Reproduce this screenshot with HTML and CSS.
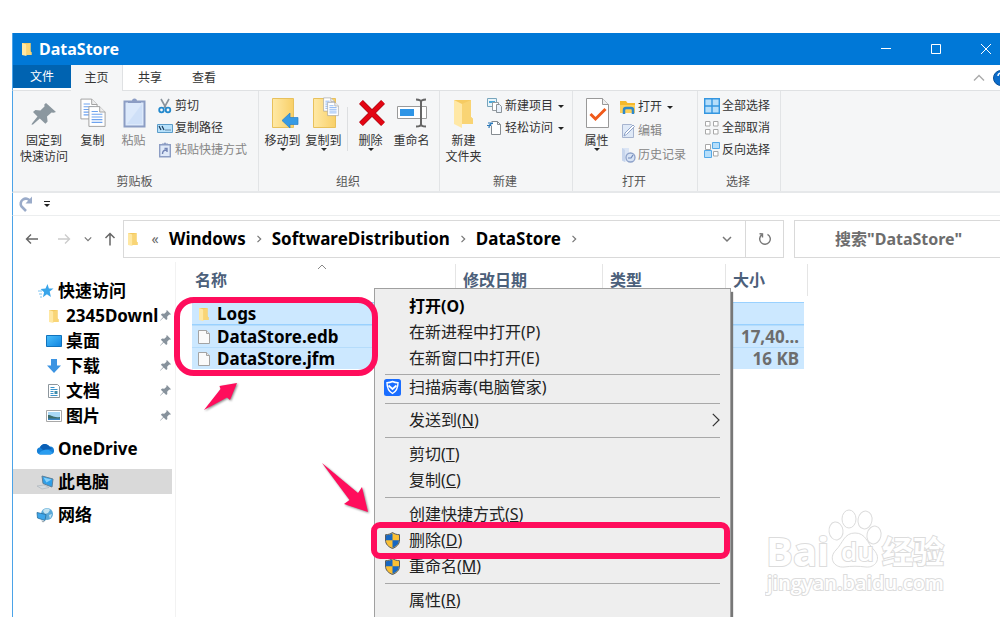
FILE: index.html
```html
<!DOCTYPE html>
<html lang="zh-CN">
<head>
<meta charset="utf-8">
<title>DataStore</title>
<link rel="stylesheet" href="styles.css">
</head>
<body>
<svg class="sprite" aria-hidden="true">
  <defs>
    <linearGradient id="gold" x1="0" x2="1"><stop offset="0" stop-color="#ffe9a6"/><stop offset="1" stop-color="#f8cf67"/></linearGradient>
    <linearGradient id="sky" x1="0" y1="0" x2="1" y2="1"><stop offset="0" stop-color="#4cc0fb"/><stop offset="1" stop-color="#0f83e0"/></linearGradient>
  </defs>
  <symbol id="folder" viewBox="0 0 16 16"><path d="M3 2h8.500v8.500l1 .8V14H3z" fill="#f3c95f"/><path d="M3 2l4.500 1.400V15L3 14z" fill="#ffe8a3"/><path d="M7.500 3.400L11.500 2v8.500l1 .8V14h-5z" fill="#f9d576"/></symbol>
  <symbol id="file" viewBox="0 0 16 16"><path d="M2.500 1.500h8l3 3v10h-11z" fill="#fafafa" stroke="#a3a3a3"/><path d="M10.500 1.500v3h3" fill="#e6e6e6" stroke="#a3a3a3"/></symbol>
  <symbol id="pin" viewBox="0 0 16 16"><path d="M10 0l6 6-1.600.8-1-.2-3 3.200.3 3.200-1.700 1.700-3.700-3.700L.8 15.400 0 15.900l.4-1L4.600 10 1.200 6.900l1.900-1.700 3.100.4L9.500 2.600 9.200 1.500z" fill="#87929c"/></symbol>
  <symbol id="chev-right" viewBox="0 0 8 8"><path d="M2.500.8L5.700 4 2.500 7.200" fill="none" stroke="#777" stroke-width="1.200"/></symbol>
  <symbol id="chev-down" viewBox="0 0 10 10"><path d="M1 3l4 4 4-4" fill="none" stroke="#777" stroke-width="1.500"/></symbol>
  <symbol id="shield" viewBox="0 0 16 17"><path d="M8 .5C6 2 3.500 2.700 1 2.700V8c0 4.300 3 7 7 8.500 4-1.500 7-4.200 7-8.500V2.700C12.500 2.700 10 2 8 .5z" fill="#fbbf33" stroke="#555b62"/><path d="M8 1.200V8.300H1.500V3.200C4 3.200 6.300 2.500 8 1.200zM8 8.300h6.500C14.300 12 11.700 14.500 8 15.900z" fill="#1767c2"/></symbol>
  <symbol id="page" viewBox="0 0 20 24"><path d="M1 1h12l6 6v16H1z" fill="#fff" stroke="#9b9b9b"/><path d="M13 1v6h6" fill="#eee" stroke="#9b9b9b"/><path d="M4 9.500h12M4 12.500h12M4 15.500h12M4 18.500h12M4 6.500h7" stroke="#6ea3ef" stroke-width="1.200"/></symbol>
</svg>

<div class="window">
  <header class="titlebar">
    <svg class="i16"><use href="#folder"/></svg>
    <h1 class="title">DataStore</h1>
    <div class="caption">
      <button class="caption-btn" aria-label="最小化"><svg class="i12" viewBox="0 0 12 12"><path d="M1 5.500h10"/></svg></button>
      <button class="caption-btn" aria-label="最大化"><svg class="i12" viewBox="0 0 12 12"><path d="M1.500 1.500h9v9h-9z"/></svg></button>
      <button class="caption-btn" aria-label="关闭"><svg class="i12" viewBox="0 0 12 12"><path d="M1 1l10 10M11 1L1 11"/></svg></button>
    </div>
  </header>

  <nav class="tabs">
    <button class="tab tab-file">文件</button>
    <button class="tab tab-active">主页</button>
    <button class="tab">共享</button>
    <button class="tab">查看</button>
    <div class="tabs-end">
      <button class="plain" aria-label="折叠功能区"><svg class="i12" viewBox="0 0 12 12"><path d="M1 8.500l5-5 5 5" fill="none" stroke="#aaa" stroke-width="1.400"/></svg></button>
      <button class="plain" aria-label="帮助"><svg class="i16" viewBox="0 0 16 16"><circle cx="8" cy="8" r="7.500" fill="#0a6ccb" stroke="#084e96"/><path d="M5 6a3 3 0 1 1 3.500 3v1.500" fill="none" stroke="#fff" stroke-width="1.500"/></svg></button>
    </div>
  </nav>

  <div class="ribbon">
    <section class="group group-clip">
      <div class="group-body">
        <button class="big big-wide"><svg class="i32" viewBox="0 0 32 32"><path d="M18 6l10 9-2.500.8-2-.3-4.500 4 .6 5-2.200 2.300-5.600-5.300L5 27.500l-1.500.3.600-1.600 5.400-6.700-4.500-4.600L7.400 13l5 .4L16.500 9.500 16.300 7.500z" fill="#8b979f"/></svg>固定到<br>快速访问</button>
        <button class="big"><svg class="i32" viewBox="0 0 32 32"><svg x="3" y="1" width="18" height="22"><use href="#page"/></svg><svg x="11" y="8" width="18" height="23"><use href="#page"/></svg></svg>复制</button>
        <button class="big muted"><svg class="i32" viewBox="0 0 32 32"><path d="M6.500 4.500h20v25h-20z" fill="#dce9fb" stroke="#8c9dc4" stroke-width="2"/><path d="M9 27l15-20v20z" fill="#cfe0f8"/><path d="M10 6V4h4a2.500 2.500 0 0 1 5 0h4v2z" fill="#8c9dc4"/></svg>粘贴</button>
        <div class="list">
          <button class="small"><svg class="i16" viewBox="0 0 16 16"><path d="M4 1l5 9M12 1L7 10" stroke="#8b949c" stroke-width="1.600"/><circle cx="4.500" cy="12" r="2.300" fill="none" stroke="#2389cd" stroke-width="1.800"/><circle cx="11" cy="12" r="2.300" fill="none" stroke="#2389cd" stroke-width="1.800"/></svg>剪切</button>
          <button class="small"><svg class="i16" viewBox="0 0 16 16"><path d="M.5 4.500h15v8H.5z" fill="#b7e1fb" stroke="#5b9cc9"/><path d="M2 6l2 4M5 6l2 4M8.500 10h1M10.500 10h1M12.500 10h1" stroke="#173a5a" stroke-width="1.200"/></svg>复制路径</button>
          <button class="small muted"><svg class="i16" viewBox="0 0 16 16"><path d="M2.700 2.700h10.600v12H2.700z" fill="#dfe9f8" stroke="#8c9dc4" stroke-width="1.400"/><path d="M5 3V1.500h2a1 1 0 0 1 2 0h2V3z" fill="#8c9dc4"/><path d="M5.500 12c0-3 1-4 4-4M7.500 6.500H10V10" fill="none" stroke="#7385b5" stroke-width="1.400"/></svg>粘贴快捷方式</button>
        </div>
      </div>
      <div class="group-name">剪贴板</div>
    </section>

    <section class="group group-org">
      <div class="group-body">
        <button class="big drop"><svg class="i32" viewBox="0 0 32 32"><path d="M5.500 1.500h21v29h-21z" fill="url(#gold)" stroke="#e8c15c"/><path d="M15 23.500l8-7.500v4.500h8v7h-8V31z" fill="#379ae4" stroke="#2680ca" stroke-width=".7"/></svg>移动到</button>
        <button class="big drop"><svg class="i32" viewBox="0 0 32 32"><path d="M5.500 1.500h22v29h-22z" fill="url(#gold)" stroke="#e8c15c"/><svg x="15" y="0" width="12" height="15"><use href="#page"/></svg><svg x="19" y="4" width="12" height="16"><use href="#page"/></svg></svg>复制到</button>
        <span class="divider"></span>
        <button class="big drop"><svg class="i32" viewBox="0 0 32 32"><path d="M6 5l22 22M28 5L6 27" stroke="#a60a14" stroke-width="5.500"/><path d="M6 5l22 22M28 5L6 27" stroke="#e30613" stroke-width="4.300"/></svg>删除</button>
        <button class="big"><svg class="i32" viewBox="0 0 32 32"><path d="M1.500 9.500h29v12h-29z" fill="#fff" stroke="#9a9a9a"/><path d="M4 12h14v7H4z" fill="#2f95e6"/><path d="M20 2.500c3 0 5 .5 5 2.500v22c0 2-2 2.500-5 2.500M30 2.500c-3 0-5 .5-5 2.500M30 29.500c-3 0-5-.5-5-2.500" fill="none" stroke="#666" stroke-width="2"/></svg>重命名</button>
      </div>
      <div class="group-name">组织</div>
    </section>

    <section class="group group-new">
      <div class="group-body">
        <button class="big"><svg class="i32" viewBox="0 0 32 32"><path d="M6 3h17v17l2 2v5H12z" fill="#f6cb62"/><path d="M6 3l8 4v24l-8-4z" fill="#ffe8a6"/><path d="M14 7l9-4v17l2 2v5H14z" fill="#f9d474"/></svg>新建<br>文件夹</button>
        <div class="list">
          <button class="small drop-side"><svg class="i16" viewBox="0 0 16 16"><path d="M.5.500h9v8h-9z" fill="#e8f5fb" stroke="#78a5bc"/><path d="M2 3h6v2H2z" fill="#4aa8d8"/><path d="M5.500 4.500h6v8h-6z" fill="#fff" stroke="#949ba0"/><path d="M9.500 6.500h3l2 2v6h-5z" fill="#e8f0fa" stroke="#8a9298"/></svg>新建项目</button>
          <button class="small drop-side"><svg class="i16" viewBox="0 0 16 16"><path d="M4.500 1.500h6l3 3v10h-9v-9" fill="#fff" stroke="#868c91"/><path d="M10.500 1.500v3h3" fill="none" stroke="#868c91"/><path d="M1 3h5M0 5.500h4M2 8c0-3 1-4.500 4-4.500" fill="none" stroke="#2c78b8" stroke-width="1.200"/></svg>轻松访问</button>
        </div>
      </div>
      <div class="group-name">新建</div>
    </section>

    <section class="group group-open">
      <div class="group-body">
        <button class="big drop"><svg class="i32" viewBox="0 0 32 32"><path d="M5.500 1.500h16l6 6v23h-22z" fill="#fff" stroke="#999"/><path d="M21.500 1.500v6h6" fill="#eee" stroke="#999"/><path d="M9.500 17l5 5 10-10" fill="none" stroke="#f05a1a" stroke-width="3"/></svg>属性</button>
        <div class="list list-loose">
          <button class="small drop-side"><svg class="i16" viewBox="0 0 16 16"><path d="M0 2h6l1.500 2H15v10H0z" fill="#f5b92b"/><path d="M0 6h15v8H0z" fill="#fdd05b"/><path d="M4 15v-4a2 2 0 0 1 2-2h5a2 2 0 0 1 2 2v4" fill="none" stroke="#2e88c9" stroke-width="2.500"/></svg>打开</button>
          <button class="small muted"><svg class="i16" viewBox="0 0 16 16"><path d="M2.500 1.500h9l2 2v11h-11z" fill="#dfe9f7" stroke="#a7b4cf"/><path d="M4 13l1-3 8-8 1.500 1.500-8 8z" fill="#fff" stroke="#8fa3c8"/></svg>编辑</button>
          <button class="small muted"><svg class="i16" viewBox="0 0 16 16"><path d="M2 1h7v12l-4 2-3-1.500z" fill="#dbe5f5"/><path d="M2 1l3 2v12l-3-1.500z" fill="#c7d5ec"/><circle cx="10.500" cy="10.500" r="4.500" fill="#d7e3f5" stroke="#8ea2c9" stroke-width="1.300"/><path d="M8 11h3l2-3" fill="none" stroke="#6e86b7" stroke-width="1.200"/></svg>历史记录</button>
        </div>
      </div>
      <div class="group-name">打开</div>
    </section>

    <section class="group group-select">
      <div class="group-body">
        <div class="list">
          <button class="small"><svg class="i16" viewBox="0 0 16 16"><path d="M.7.700h14.600v14.600H.7zM8 .7v14.600M.7 8h14.600" fill="#b6defa" stroke="#3496e0" stroke-width="1.400"/></svg>全部选择</button>
          <button class="small"><svg class="i16" viewBox="0 0 16 16"><path d="M1.500 1.500h4.500v4.500H1.500zM9.500 1.500H14v4.500H9.500zM1.500 9.500H6V14H1.500zM9.500 9.500H14V14H9.500z" fill="#fff" stroke="#a8a8a8"/></svg>全部取消</button>
          <button class="small"><svg class="i16" viewBox="0 0 16 16"><path d="M1.500 2.500h5v5h-5zM9.500 9.500h4.500V14H9.500z" fill="#fff" stroke="#a8a8a8"/><path d="M8.500.500h7v6h-7zM.5 8.500h7v7h-7z" fill="#b6defa" stroke="#54a9e8"/></svg>反向选择</button>
        </div>
      </div>
      <div class="group-name">选择</div>
    </section>
  </div>

  <div class="quickbar">
    <button class="plain" aria-label="恢复"><svg class="i16" viewBox="0 0 16 16"><path d="M8 15L3.500 10.500A5 5 0 1 1 12 5" fill="none" stroke="#9aabc9" stroke-width="2.600"/><path d="M14 .5v7H7.500z" fill="#9aabc9"/></svg></button>
    <button class="plain" aria-label="自定义快速访问工具栏"><svg class="i8" viewBox="0 0 8 8"><path d="M1 1.500h6" stroke="#222"/><path d="M1 4h6L4 7z" fill="#222"/></svg></button>
  </div>

  <div class="navbar">
    <button class="plain nav-btn" aria-label="后退"><svg class="i14" viewBox="0 0 14 14"><path d="M13 7H1.500M6 2.500L1.500 7 6 11.500" fill="none" stroke="#666" stroke-width="1.400"/></svg></button>
    <button class="plain nav-btn" aria-label="前进"><svg class="i14" viewBox="0 0 14 14"><path d="M1 7h11.500M8 2.500L12.500 7 8 11.500" fill="none" stroke="#ccc" stroke-width="1.400"/></svg></button>
    <button class="plain nav-recent" aria-label="最近浏览"><svg class="i8" viewBox="0 0 10 10"><use href="#chev-down"/></svg></button>
    <button class="plain nav-up" aria-label="上移"><svg class="i14" viewBox="0 0 14 14"><path d="M7 13.500V1.500M2.500 6L7 1.500 11.500 6" fill="none" stroke="#666" stroke-width="1.500"/></svg></button>
    <div class="address">
      <svg class="i16"><use href="#folder"/></svg>
      <span class="crumb-sep crumb-more">«</span>
      <button class="crumb">Windows</button>
      <span class="crumb-sep"><svg class="i8"><use href="#chev-right"/></svg></span>
      <button class="crumb">SoftwareDistribution</button>
      <span class="crumb-sep"><svg class="i8"><use href="#chev-right"/></svg></span>
      <button class="crumb">DataStore</button>
      <span class="crumb-sep"><svg class="i8"><use href="#chev-right"/></svg></span>
      <button class="plain addr-drop" aria-label="以前的位置"><svg class="i10"><use href="#chev-down"/></svg></button>
      <button class="plain addr-refresh" aria-label="刷新"><svg class="i14" viewBox="0 0 14 14"><path d="M9.500 2.300A5.300 5.300 0 1 1 4 2.600M1.500 1.800L4.500 2v3.500" fill="none" stroke="#777" stroke-width="1.400"/></svg></button>
    </div>
    <input class="search" type="search" aria-label="搜索" placeholder='搜索"DataStore"'>
  </div>

  <main class="main">
    <nav class="sidebar">
      <a class="node" href="#"><svg class="i16" viewBox="0 0 16 16"><path d="M9.500 1l1.400 4.500 4.600.1-3.800 2.900 1.200 5.500-4-2.700-4 3 1.200-5L2.600 6 7.500 5.500z" fill="#39a5ea"/><path d="M0 8h4M1 11h3M2 14h2" stroke="#7cc4f2"/></svg>快速访问</a>
      <a class="node node-sub" href="#"><svg class="i16"><use href="#folder"/></svg><span class="node-text">2345Downl</span><svg class="pin"><use href="#pin"/></svg></a>
      <a class="node node-sub" href="#"><svg class="i16" viewBox="0 0 16 16"><path d="M.5 2.500h15v11H.5z" fill="url(#sky)" stroke="#1173bd"/></svg><span class="node-text">桌面</span><svg class="pin"><use href="#pin"/></svg></a>
      <a class="node node-sub" href="#"><svg class="i16" viewBox="0 0 16 16"><path d="M5 1h6v6.500h4L8 15 1 7.500h4z" fill="#3c94e2"/></svg><span class="node-text">下载</span><svg class="pin"><use href="#pin"/></svg></a>
      <a class="node node-sub" href="#"><svg class="i16" viewBox="0 0 16 16"><path d="M2.500 1.500h9l2 2v11h-11z" fill="#fff" stroke="#8d969d"/><path d="M4.500 4.500h4M4.500 6.500h7M4.500 8.500h3M4.500 10.500h3M4.500 12.500h7" stroke="#3a93cc"/><path d="M8.500 8h3v3h-3z" fill="#3e8ba8"/></svg><span class="node-text">文档</span><svg class="pin"><use href="#pin"/></svg></a>
      <a class="node node-sub" href="#"><svg class="i16" viewBox="0 0 16 16"><path d="M.5 2.500h15v11H.5z" fill="#fff" stroke="#a8a8a8"/><path d="M2 4h12v8H2z" fill="#a9d8f6"/><path d="M2 7c4 0 5 3 12 2v3H2z" fill="#3e6d6b"/><path d="M2 10.500h12V12H2z" fill="#3c86c4"/></svg><span class="node-text">图片</span><svg class="pin"><use href="#pin"/></svg></a>
      <a class="node node-root" href="#"><svg class="i18" viewBox="0 0 18 16"><path d="M4 13.500a3.700 3.700 0 0 1 0-7.300 5.500 5.500 0 0 1 9.500-.7A4 4 0 0 1 14.500 13.500z" fill="#1580d8"/><path d="M4 6.200a5.500 5.500 0 0 1 9.500-.7L16 8l-9 1z" fill="#0b5fb5"/><path d="M3 13c1-3 6-5 10-4l3.500 2.500a3 3 0 0 1-2 2H4z" fill="#2a9df0"/></svg>OneDrive</a>
      <a class="node node-root node-active" href="#"><svg class="i18" viewBox="0 0 18 16"><path d="M6 2l11 3-1 8-9-3.500z" fill="#2f9fe8" stroke="#5c7f99"/><path d="M7.500 3.500l8 2-5 3z" fill="#86d0fa"/><path d="M1 12l7-1 5 2.500L6 15z" fill="#d4dadf" stroke="#a7b0b7" stroke-width=".6"/></svg>此电脑</a>
      <a class="node node-root" href="#"><svg class="i18" viewBox="0 0 18 16"><circle cx="11" cy="7" r="6" fill="#5ba9d8"/><path d="M7 4c2-3 5-3 7-1l-2 3-3 1zM13 8l3-1-2 5z" fill="#c4e3f0"/><path d="M1 5.500l9 2-1 6-7.500-2.500z" fill="#3ea6ea" stroke="#2a6e9c" stroke-width=".8"/><path d="M5 13.500l4 .5-2 1.500z" fill="#9aa7b0"/></svg>网络</a>
    </nav>

    <div class="files">
      <table class="table">
        <colgroup><col class="col-name"><col class="col-date"><col class="col-type"><col class="col-size"><col class="col-end"></colgroup>
        <thead>
          <tr><th>名称<svg class="sort" viewBox="0 0 10 6"><path d="M1 5l4-4 4 4" fill="none" stroke="#888"/></svg></th><th>修改日期</th><th>类型</th><th colspan="2">大小</th></tr>
        </thead>
        <tbody>
          <tr class="row row-focus"><td><span class="name"><svg class="i16"><use href="#folder"/></svg>Logs</span></td><td></td><td></td><td></td></tr>
          <tr class="row"><td><span class="name"><svg class="i16"><use href="#file"/></svg>DataStore.edb</span></td><td></td><td></td><td class="size">17,40...</td></tr>
          <tr class="row"><td><span class="name"><svg class="i16"><use href="#file"/></svg>DataStore.jfm</span></td><td></td><td></td><td class="size">16 KB</td></tr>
        </tbody>
      </table>
    </div>

    <div class="menu" role="menu">
      <button class="item item-default" role="menuitem">打开(O)</button>
      <button class="item" role="menuitem">在新进程中打开(P)</button>
      <button class="item" role="menuitem">在新窗口中打开(E)</button>
      <hr class="sep sep-tight">
      <button class="item item-app" role="menuitem"><svg class="item-icon" viewBox="0 0 17 17"><rect width="17" height="17" rx="2.500" fill="#1a6dff"/><path d="M8.500 2.500c2 1 4 1.200 5.500 1.200C14 9 12 12.500 8.500 14.500 5 12.500 3 9 3 3.700c1.500 0 3.500-.2 5.500-1.200z" fill="none" stroke="#fff" stroke-width="1.400"/><path d="M4.500 6.500l4 3.500 4-3.500" fill="none" stroke="#fff" stroke-width="1.800"/></svg>扫描病毒(电脑管家)</button>
      <hr class="sep">
      <button class="item" role="menuitem">发送到(<u>N</u>)<svg class="item-more" viewBox="0 0 8 14"><path d="M.8.800L7 7 .8 13.200" fill="none" stroke="#333" stroke-width="1.200"/></svg></button>
      <hr class="sep">
      <button class="item" role="menuitem">剪切(<u>T</u>)</button>
      <button class="item" role="menuitem">复制(<u>C</u>)</button>
      <hr class="sep">
      <button class="item" role="menuitem">创建快捷方式(<u>S</u>)</button>
      <button class="item" role="menuitem"><svg class="item-icon"><use href="#shield"/></svg>删除(<u>D</u>)</button>
      <button class="item" role="menuitem"><svg class="item-icon"><use href="#shield"/></svg>重命名(<u>M</u>)</button>
      <hr class="sep">
      <button class="item" role="menuitem">属性(<u>R</u>)</button>
    </div>

    <div class="mark mark-files"></div>
    <div class="mark mark-delete"></div>
    <svg class="arrow arrow-files" viewBox="0 0 36 30"><path d="M1 28L17.500 7l-1-3L34 1l-7 17-3-2.500z"/></svg>
    <svg class="arrow arrow-delete" viewBox="0 0 50 54"><path d="M1 1l36 30 4-6 6 25-24-8 5.500-4z"/></svg>
    <svg class="watermark" viewBox="0 0 190 96" aria-hidden="true">
      <text class="wm-big" x="1" y="62">Bai</text>
      <ellipse cx="71" cy="27" rx="7" ry="9" transform="rotate(-8 71 27)"/>
      <ellipse cx="84" cy="15" rx="7" ry="9"/>
      <ellipse cx="100" cy="16" rx="7" ry="9" transform="rotate(10 100 16)"/>
      <ellipse cx="109" cy="31" rx="7" ry="9" transform="rotate(12 109 31)"/>
      <path d="M90 29c11 0 12 10 19 17 8 9 1 18-8 17-8-1-14-1-22 0-10 1-16-9-8-17 7-7 8-17 19-17z"/>
      <text class="wm-du" x="76" y="57">du</text>
      <text class="wm-cn" x="117" y="59">经验</text>
      <text class="wm-url" x="2" y="86">jingyan.baidu.com</text>
    </svg>
  </main>
</div>
</body>
</html>
```
FILE: styles.css
```css
* { box-sizing: border-box; }

body {
  margin: 0;
  background: #fff;
  color: #000;
  font-family: "Noto Sans", "Noto Sans CJK SC", sans-serif;
  font-size: 12px;
  line-height: 16px;
}

svg { display: block; flex: none; }
button { border: 0; padding: 0; background: none; color: inherit; font: inherit; }
.sprite { position: absolute; width: 0; height: 0; }
.i8 { width: 8px; height: 8px; }
.i10 { width: 10px; height: 10px; }
.i12 { width: 12px; height: 12px; }
.i14 { width: 14px; height: 14px; }
.i16 { width: 16px; height: 16px; }
.i18 { width: 18px; height: 16px; }
.i32 { width: 32px; height: 32px; }

.window {
  display: flex;
  flex-direction: column;
  height: 100vh;
  padding: 33px 0 0 12px;
  overflow: hidden;
}
.window > * { flex: none; border-left: 1px solid #4ba3e8; }

/* title bar */
.titlebar {
  display: flex;
  align-items: center;
  gap: 4px;
  height: 32px;
  padding-left: 6px;
  background: #0078d7;
  color: #fff;
}
.title { flex: 1; margin: 0; font-size: 16px; line-height: 24px; font-weight: 700; }
.caption { display: flex; margin-right: -11px; }
.caption-btn { display: grid; place-items: center; width: 50px; height: 32px; }
.caption-btn path { fill: none; stroke: #fff; }

/* tabs */
.tabs { display: flex; height: 26px; border-bottom: 1px solid #dfe1e3; color: #333; }
.tab { width: 54px; height: 25px; }
.tab-file { width: 58px; height: 23px; background: #0063b1; color: #fff; }
.tab-active {
  width: 52px;
  height: 26px;
  border-right: 1px solid #dfe1e3;
  background: #f5f6f7;
}
.tabs-end { display: flex; align-items: center; gap: 8px; margin: 0 -9px 0 auto; }
.plain { display: grid; place-items: center; }

/* ribbon */
.ribbon { display: flex; height: 102px; border-bottom: 2px solid #e6e8ea; background: #f5f6f7; color: #333; }
.group {
  display: flex;
  flex-direction: column;
  padding: 4px 0 1px 3px;
  border-right: 1px solid #e2e4e6;
}
.group-clip { width: 246px; }
.group-org { width: 181px; }
.group-new { width: 133px; }
.group-open { width: 125px; }
.group-select { width: 83px; }
.group-body { display: flex; flex: 1; align-items: flex-start; }
.group-name { padding-right: 5px; text-align: center; color: #555; }
.big {
  display: flex;
  flex-direction: column;
  align-items: center;
  gap: 4px;
  width: 41px;
  padding-top: 2px;
  white-space: nowrap;
}
.big-wide { width: 56px; }
.muted { color: #858585; }
.drop::after { content: ""; margin-top: -5px; border: 3px solid transparent; border-top-color: #222; }
.divider { width: 1px; height: 44px; margin: 12px 2px 0 3px; background: #dddfe1; }
.list { display: grid; grid-auto-rows: 22px; margin-left: 3px; }
.list-loose { grid-auto-rows: 24px; }
.small { display: flex; align-items: center; gap: 2px; white-space: nowrap; }
.drop-side::after { content: ""; margin: 3px 0 0 3px; border: 3px solid transparent; border-top-color: #222; }

/* quick access toolbar */
.quickbar {
  display: flex;
  align-items: center;
  gap: 9px;
  height: 23px;
  padding-left: 5px;
  border-bottom: 1px solid #eceeef;
}

/* navigation */
.navbar { display: flex; height: 46px; padding: 4px 0 4px 3px; }
.nav-btn { width: 32px; }
.nav-recent { width: 16px; }
.nav-up { width: 27px; }
.address {
  display: flex;
  flex: 1;
  align-items: center;
  padding-left: 1px;
  border: 1px solid #d9d9d9;
}
.crumb { font-size: 17px; line-height: 24px; font-weight: 700; }
.crumb-sep { display: grid; place-items: center; width: 26px; }
.crumb-more { width: 28px; color: #666; font-size: 14px; }
.addr-drop { width: 36px; margin-left: auto; }
.addr-refresh { align-self: stretch; width: 38px; border-left: 1px solid #d9d9d9; }
.search {
  width: 206px;
  margin-left: 10px;
  padding: 0 0 0 40px;
  border: 1px solid #d9d9d9;
  border-right: 0;
  border-radius: 0;
  background: #fff;
  font: 700 16px/24px "Noto Sans", "Noto Sans CJK SC", sans-serif;
}
.search::placeholder { color: #6d6d6d; opacity: 1; }

/* content */
.window > .main { position: relative; display: flex; flex: 1; min-height: 0; }
.sidebar { width: 163px; padding: 16px 3px 0 0; border-right: 1px solid #f2f2f2; }
.node {
  display: flex;
  align-items: center;
  gap: 4px;
  height: 25px;
  padding-left: 25px;
  color: #000;
  font-size: 17px;
  font-weight: 700;
  line-height: 24px;
  text-decoration: none;
  white-space: nowrap;
}
.node-sub { padding: 0 1px 0 33px; }
.node-text { flex: 1; min-width: 0; }
.pin { width: 11px; height: 11px; }
.node-root { margin-top: 8px; padding-left: 23px; }
.node-active { background: #d9d9d9; }

.files { padding: 2px 0 0 16px; }
.table { table-layout: fixed; width: 616px; border-collapse: separate; border-spacing: 0; font-size: 16px; line-height: 22px; }
.col-name { width: 264px; }
.col-date { width: 147px; }
.col-type { width: 123px; }
.col-size { width: 78px; }
.col-end { width: 4px; }
.table th {
  position: relative;
  height: 32px;
  padding: 0 0 0 7px;
  border-right: 1px solid #e5e5e5;
  color: #4c607a;
  text-align: left;
}
.table th:first-child { padding-left: 3px; }
.sort { position: absolute; top: 0; left: 125px; width: 10px; height: 6px; }
.table tbody::before { content: ""; display: block; height: 6px; }
.row td { height: 22px; padding: 0; background: #cce8ff; border-top: 1px solid #b5dcfb; font-size: 17px; font-weight: 700; line-height: 21px; }
.row-focus td { border-bottom: 1px solid #99d1ff; border-top-color: #99d1ff; }
.row .size { padding-right: 5px; color: #6d6d6d; text-align: right; }
.name { display: flex; align-items: center; gap: 5px; padding-left: 4px; }

/* context menu */
.menu {
  position: absolute;
  top: 26px;
  left: 361px;
  width: 357px;
  padding: 4px 0;
  border: 1px solid #a0a0a0;
  background: #eee;
  box-shadow: 2px 4px 1px #777;
}
.item {
  position: relative;
  display: flex;
  align-items: center;
  width: 100%;
  height: 26px;
  padding-left: 34px;
  color: #222;
  font-size: 16px;
  line-height: 24px;
}
.item-default { color: #000; font-weight: 700; }
.item-app { height: 24px; }
.item-icon { position: absolute; left: 9px; width: 17px; height: 17px; }
.item-more { width: 8px; height: 14px; margin: 0 10px 0 auto; }
.sep { height: 1px; margin: 4px 10px 3px; border: 0; background: #a8a8a8; }
.sep-tight { margin: 3px 10px 0; }

/* callouts */
.mark { position: absolute; border: 6px solid #ff0d5c; pointer-events: none; }
.mark-files { top: 35px; left: 161px; width: 204px; height: 79px; border-radius: 20px; }
.mark-delete { top: 260px; left: 358px; width: 359px; height: 37px; border-radius: 9px; }
.arrow { position: absolute; fill: #ff0d5c; filter: drop-shadow(1px 1px 1px #888); }
.arrow-files { top: 120px; left: 190px; width: 36px; height: 30px; }
.arrow-delete { top: 200px; left: 308px; width: 50px; height: 54px; }

.watermark {
  position: absolute;
  top: 242px;
  left: 752px;
  width: 190px;
  height: 96px;
  fill: #fff;
  stroke: #dcdcdc;
  stroke-width: 1;
}
.watermark text { paint-order: stroke; stroke-width: 2; font-family: "Open Sans", "Noto Sans CJK SC", sans-serif; }
.wm-big { font-size: 40px; font-weight: 700; }
.wm-du { font-size: 26px; font-weight: 600; }
.wm-cn { font-size: 31px; font-weight: 700; }
.wm-url { font-size: 20px; font-weight: 600; }
```
